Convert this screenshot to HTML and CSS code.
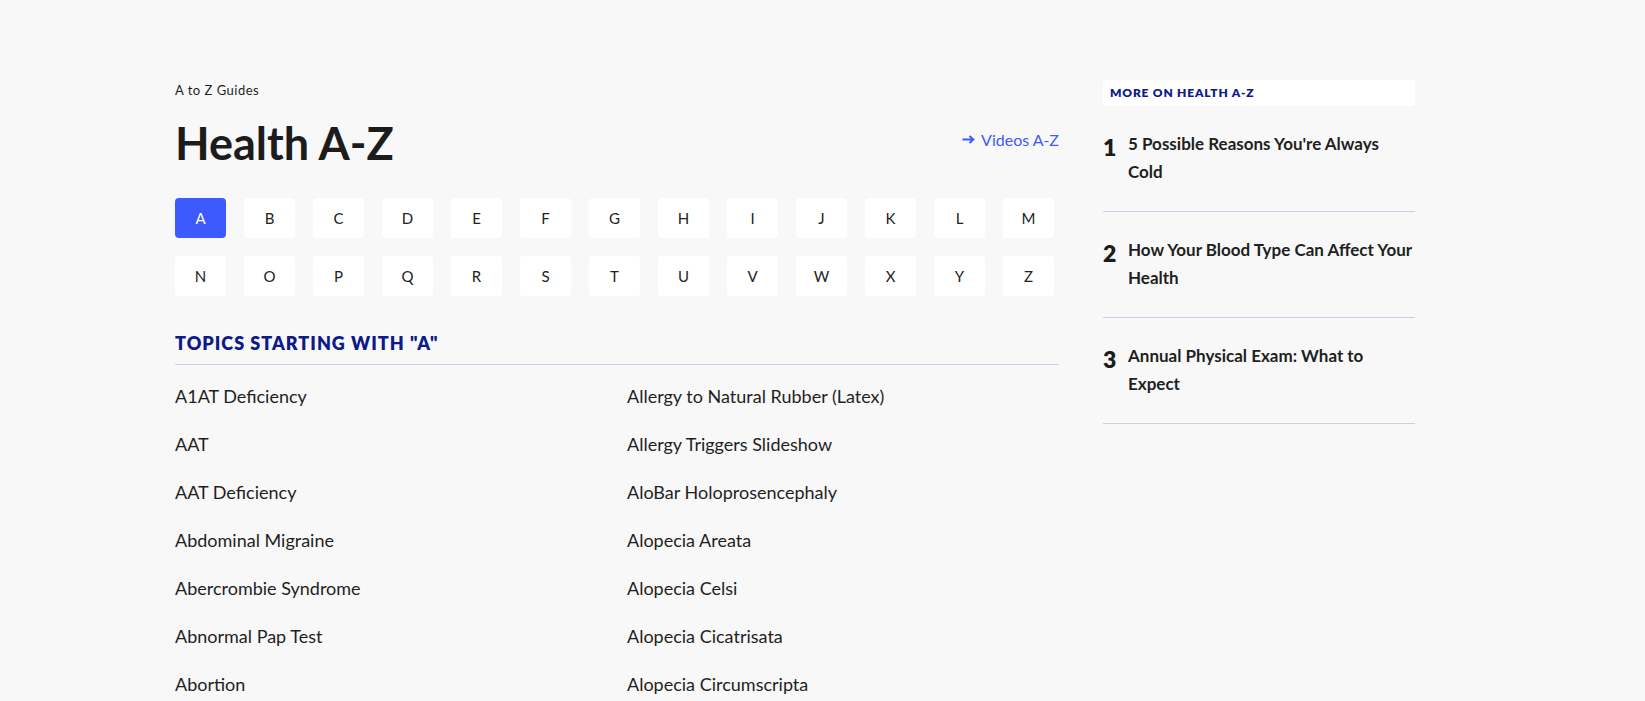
FILE: index.html
```html
<!DOCTYPE html>
<html lang="en">
<head>
<meta charset="utf-8">
<title>Health A-Z</title>
<link rel="stylesheet" href="styles.css">
</head>
<body>
<div class="page">
  <main class="main">
    <div class="crumb">A to Z Guides</div>
    <div class="title-row">
      <h1 class="title">Health A-Z</h1>
      <a class="videos" href="#"><svg class="arrow" width="13" height="9" viewBox="0 0 13 9" aria-hidden="true"><path d="M0.5 4.5H11M7.5 1L11.3 4.5L7.5 8" fill="none" stroke="#3d5afe" stroke-width="2"/></svg>Videos A-Z</a>
    </div>
    <div class="letters">
      <a class="letter active" href="#">A</a><a class="letter" href="#">B</a><a class="letter" href="#">C</a><a class="letter" href="#">D</a><a class="letter" href="#">E</a><a class="letter" href="#">F</a><a class="letter" href="#">G</a><a class="letter" href="#">H</a><a class="letter" href="#">I</a><a class="letter" href="#">J</a><a class="letter" href="#">K</a><a class="letter" href="#">L</a><a class="letter" href="#">M</a>
      <a class="letter" href="#">N</a><a class="letter" href="#">O</a><a class="letter" href="#">P</a><a class="letter" href="#">Q</a><a class="letter" href="#">R</a><a class="letter" href="#">S</a><a class="letter" href="#">T</a><a class="letter" href="#">U</a><a class="letter" href="#">V</a><a class="letter" href="#">W</a><a class="letter" href="#">X</a><a class="letter" href="#">Y</a><a class="letter" href="#">Z</a>
    </div>
    <h2 class="topics-head">TOPICS STARTING WITH "A"</h2>
    <div class="topics">
      <ul class="topic-col">
        <li>A1AT Deficiency</li>
        <li>AAT</li>
        <li>AAT Deficiency</li>
        <li>Abdominal Migraine</li>
        <li>Abercrombie Syndrome</li>
        <li>Abnormal Pap Test</li>
        <li>Abortion</li>
      </ul>
      <ul class="topic-col">
        <li>Allergy to Natural Rubber (Latex)</li>
        <li>Allergy Triggers Slideshow</li>
        <li>AloBar Holoprosencephaly</li>
        <li>Alopecia Areata</li>
        <li>Alopecia Celsi</li>
        <li>Alopecia Cicatrisata</li>
        <li>Alopecia Circumscripta</li>
      </ul>
    </div>
  </main>
  <aside class="side">
    <div class="side-head">MORE ON HEALTH A-Z</div>
    <ol class="side-list">
      <li class="side-item"><span class="num">1</span><span class="side-title">5 Possible Reasons You're Always Cold</span></li>
      <li class="side-item"><span class="num">2</span><span class="side-title">How Your Blood Type Can Affect Your Health</span></li>
      <li class="side-item"><span class="num">3</span><span class="side-title">Annual Physical Exam: What to Expect</span></li>
    </ol>
  </aside>
</div>
</body>
</html>
```

FILE: styles.css
```css
html, body {
  margin: 0;
  padding: 0;
  background: #f8f8f8;
  color: #1f1f1f;
  font-family: "Lato", "Liberation Sans", sans-serif;
}

.page {
  display: flex;
  align-items: flex-start;
  gap: 44px;
  padding: 80px 0 0 175px;
}

.main {
  width: 884px;
}

.crumb {
  font-size: 13px;
  line-height: 16px;
  letter-spacing: 0.5px;
  margin-top: 2px;
}

.title-row {
  display: flex;
  align-items: center;
  justify-content: space-between;
  margin-top: 21px;
}

.title {
  margin: 0;
  font-size: 45px;
  line-height: 48px;
  font-weight: 700;
  color: #1c1c1c;
}

.videos {
  color: #3d5afe;
  text-decoration: none;
  font-size: 16px;
  display: flex;
  align-items: center;
  gap: 6px;
  margin-top: -8px;
}

.arrow {
  display: block;
}

.letters {
  display: grid;
  grid-template-columns: repeat(13, 51px);
  column-gap: 18px;
  row-gap: 18px;
  margin-top: 31px;
}

.letter {
  height: 40px;
  display: flex;
  align-items: center;
  justify-content: center;
  background: #fff;
  border-radius: 4px;
  color: #222;
  text-decoration: none;
  font-size: 15px;
}

.letter.active {
  background: #3d5afe;
  color: #fff;
}

.topics-head {
  margin: 36px 0 0;
  padding-bottom: 10px;
  border-bottom: 1px solid #cfcde6;
  font-size: 18px;
  line-height: 22px;
  font-weight: 800;
  letter-spacing: 1px;
  color: #0c1a8a;
}

.topics {
  display: grid;
  grid-template-columns: 1fr 1fr;
  column-gap: 20px;
  margin-top: 19px;
}

.topic-col {
  list-style: none;
  margin: 0;
  padding: 0;
}

.topic-col li {
  font-size: 18px;
  line-height: 24px;
  margin-bottom: 24px;
}

.side {
  width: 312px;
}

.side-head {
  background: #fff;
  border-radius: 3px;
  height: 26px;
  line-height: 26px;
  padding-left: 7px;
  font-size: 12px;
  font-weight: 800;
  letter-spacing: 0.8px;
  color: #0c1a8a;
}

.side-list {
  list-style: none;
  margin: 0;
  padding: 0;
}

.side-item {
  display: flex;
  align-items: flex-start;
  gap: 10px;
  padding: 24px 0 25px;
  border-bottom: 1px solid #cfcde6;
}

.num {
  flex: none;
  width: 15px;
  font-size: 23px;
  line-height: 28px;
  font-weight: 800;
  color: #1c1c1c;
  position: relative;
  top: 3px;
}

.side-title {
  font-size: 17px;
  line-height: 28px;
  font-weight: 700;
  color: #1f1f1f;
}
```
